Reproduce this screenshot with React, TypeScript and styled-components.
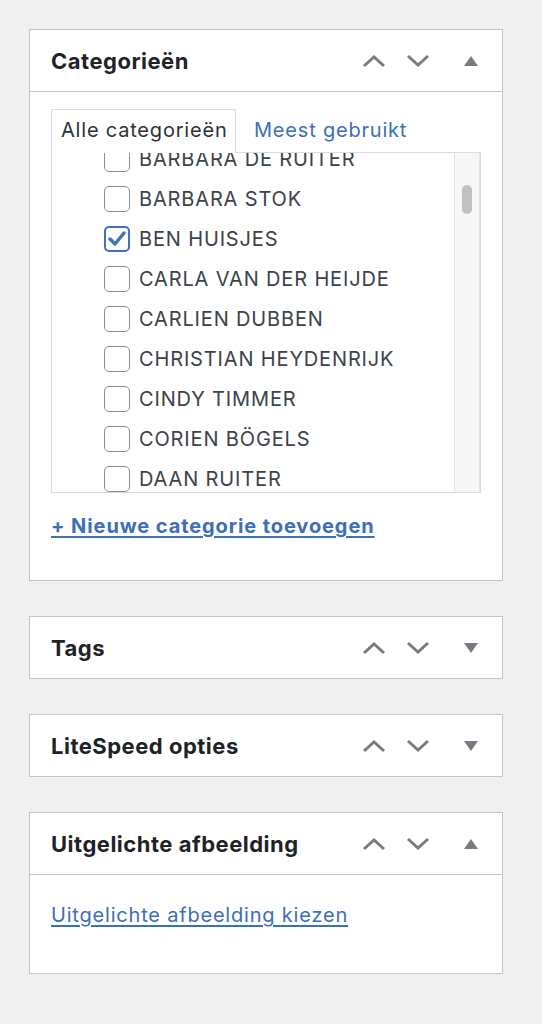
import { FC, ReactNode } from "react";
import styled, { createGlobalStyle } from "styled-components";

const GlobalStyle = createGlobalStyle`
  html, body {
    margin: 0;
    padding: 0;
    background: #f0f0f1;
    font-family: Inter, "Noto Sans", Roboto, sans-serif;
  }
`;

const Page = styled.div`
  width: 542px;
  min-height: 1024px;
  box-sizing: border-box;
  padding: 29px 39px 0 29px;
  display: flex;
  flex-direction: column;
  gap: 35px;
`;

const Panel = styled.section`
  background: #fff;
  border: 1px solid #c3c4c7;
`;

const Header = styled.div<{ $open?: boolean }>`
  height: 61px;
  display: flex;
  align-items: center;
  padding-left: 21px;
  border-bottom: ${(p) => (p.$open ? "1px solid #c3c4c7" : "none")};
`;

const Title = styled.h2`
  flex: 1;
  margin: 0;
  font-size: 22px;
  font-weight: 700;
  color: #1d2327;
  letter-spacing: 0.5px;
`;

const Controls = styled.div`
  display: flex;
  height: 100%;
`;

const HandleButton = styled.button<{ $w: number }>`
  width: ${(p) => p.$w}px;
  height: 100%;
  border: 0;
  background: none;
  padding: 0;
  display: flex;
  align-items: center;
  justify-content: center;
  color: #787c82;
`;

const Body = styled.div<{ $pad: string }>`
  padding: ${(p) => p.$pad};
`;

const Tabs = styled.div`
  display: flex;
  align-items: flex-end;
`;

const Tab = styled.div<{ $active?: boolean }>`
  height: 44px;
  box-sizing: border-box;
  display: flex;
  align-items: center;
  padding: 0 ${(p) => (p.$active ? "9px" : "17px")} 3px;
  font-size: 20px;
  letter-spacing: 0.8px;
  color: ${(p) => (p.$active ? "#2c3338" : "#3c6fb5")};
  background: ${(p) => (p.$active ? "#fff" : "transparent")};
  border: 1px solid ${(p) => (p.$active ? "#dcdcde" : "transparent")};
  border-bottom: 0;
  margin-bottom: -1px;
  position: relative;
  z-index: 1;
  width: ${(p) => (p.$active ? "185px" : "auto")};
  white-space: nowrap;
`;

const ListBox = styled.div`
  height: 341px;
  box-sizing: border-box;
  border: 1px solid #dcdcde;
  display: flex;
  overflow: hidden;
`;

const ListContent = styled.ul`
  flex: 1;
  list-style: none;
  margin: -14px 0 0;
  padding: 0 0 0 52px;
`;

const Row = styled.li`
  height: 40px;
  display: flex;
  align-items: center;
  gap: 9px;
  font-size: 20px;
  color: #3c434a;
  letter-spacing: 0.85px;
`;

const Box = styled.span<{ $checked?: boolean }>`
  width: 26px;
  height: 26px;
  box-sizing: border-box;
  flex-shrink: 0;
  border-radius: 5px;
  border: ${(p) => (p.$checked ? "2.5px solid #3f72b8" : "1.5px solid #8c8f94")};
  display: flex;
  align-items: center;
  justify-content: center;
`;

const ScrollTrack = styled.div`
  width: 26px;
  flex-shrink: 0;
  background: #f7f7f7;
  border-left: 1px solid #e6e6e6;
  border-right: 1px solid #e2e2e2;
  box-sizing: border-box;
  padding-top: 32px;
  display: flex;
  justify-content: center;
`;

const Thumb = styled.div`
  width: 10px;
  height: 29px;
  border-radius: 5px;
  background: #c1c1c1;
`;

const LinkRow = styled.div`
  margin-top: 21px;
`;

const Link = styled.a<{ $bold?: boolean }>`
  display: inline-block;
  font-size: 20px;
  font-weight: ${(p) => (p.$bold ? 700 : 400)};
  letter-spacing: ${(p) => (p.$bold ? "0.9px" : "0.8px")};
  color: #3c6fb5;
  text-decoration: underline;
  text-underline-offset: 3px;
  text-decoration-thickness: 1.5px;
`;

const Chevron: FC<{ dir: "up" | "down" }> = ({ dir }) => (
  <svg width="24" height="14" viewBox="0 0 24 14">
    <polyline
      points={dir === "up" ? "2,12 12,3 22,12" : "2,2 12,11 22,2"}
      fill="none"
      stroke="currentColor"
      strokeWidth="3"
    />
  </svg>
);

const Triangle: FC<{ up?: boolean }> = ({ up }) => (
  <svg width="14" height="10" viewBox="0 0 14 10">
    <polygon points={up ? "7,0 14,10 0,10" : "0,0 14,0 7,10"} fill="currentColor" />
  </svg>
);

const Check = () => (
  <svg width="18" height="16" viewBox="0 0 18 16">
    <polyline
      points="2,8 7,13 16,2"
      fill="none"
      stroke="#3f72b8"
      strokeWidth="3.4"
      strokeLinecap="round"
      strokeLinejoin="round"
    />
  </svg>
);

interface IPostbox {
  title: string;
  open?: boolean;
  children?: ReactNode;
}

const Postbox: FC<IPostbox> = ({ title, open, children }) => (
  <Panel>
    <Header $open={open}>
      <Title>{title}</Title>
      <Controls>
        <HandleButton $w={44}>
          <Chevron dir="up" />
        </HandleButton>
        <HandleButton $w={44}>
          <Chevron dir="down" />
        </HandleButton>
        <HandleButton $w={62}>
          <Triangle up={open} />
        </HandleButton>
      </Controls>
    </Header>
    {open && children}
  </Panel>
);

const names = [
  "BARBARA DE RUITER",
  "BARBARA STOK",
  "BEN HUISJES",
  "CARLA VAN DER HEIJDE",
  "CARLIEN DUBBEN",
  "CHRISTIAN HEYDENRIJK",
  "CINDY TIMMER",
  "CORIEN BÖGELS",
  "DAAN RUITER",
  "DAVID DE JONG",
];

const App: FC = () => (
  <>
    <GlobalStyle />
    <Page>
      <Postbox title="Categorieën" open>
        <Body $pad="17px 21px 42px 21px">
          <Tabs>
            <Tab $active>Alle categorieën</Tab>
            <Tab>Meest gebruikt</Tab>
          </Tabs>
          <ListBox>
            <ListContent>
              {names.map((n) => (
                <Row key={n}>
                  <Box $checked={n === "BEN HUISJES"}>{n === "BEN HUISJES" && <Check />}</Box>
                  {n}
                </Row>
              ))}
            </ListContent>
            <ScrollTrack>
              <Thumb />
            </ScrollTrack>
          </ListBox>
          <LinkRow>
            <Link $bold>+ Nieuwe categorie toevoegen</Link>
          </LinkRow>
        </Body>
      </Postbox>
      <Postbox title="Tags" />
      <Postbox title="LiteSpeed opties" />
      <Postbox title="Uitgelichte afbeelding" open>
        <Body $pad="28px 21px 46px 21px">
          <Link>Uitgelichte afbeelding kiezen</Link>
        </Body>
      </Postbox>
    </Page>
  </>
);

export default App;
